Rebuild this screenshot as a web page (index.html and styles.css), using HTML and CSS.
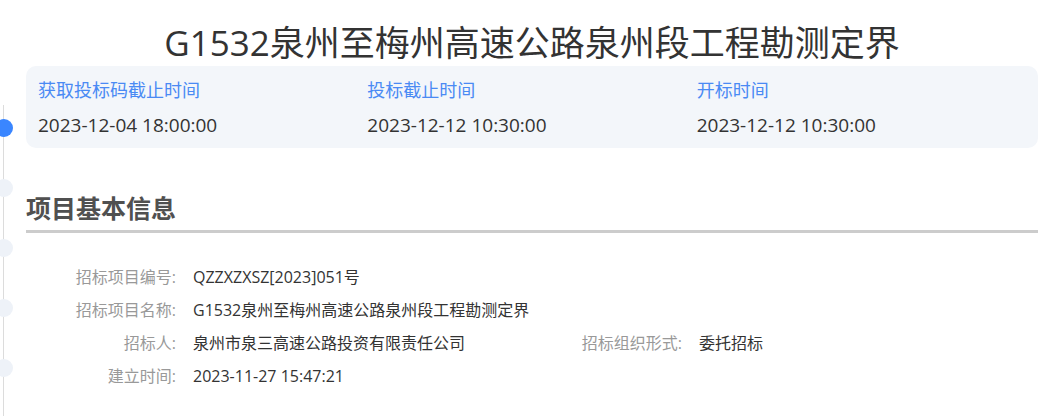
FILE: index.html
```html
<!DOCTYPE html>
<html lang="zh-CN">
<head>
    <meta charset="UTF-8">
    <meta name="viewport" content="width=device-width, initial-scale=1.0">
    <title>G1532泉州至梅州高速公路泉州段工程勘测定界</title>
    <link rel="stylesheet" href="styles.css">
</head>
<body>
    <div class="page">
        <!-- left anchor rail -->
        <div class="rail">
            <span class="dot active"></span>
            <span class="dot"></span>
            <span class="dot"></span>
            <span class="dot"></span>
            <span class="dot"></span>
        </div>

        <div class="main">
            <h1 class="title">G1532泉州至梅州高速公路泉州段工程勘测定界</h1>

            <div class="time-card">
                <div class="time-item">
                    <div class="time-label">获取投标码截止时间</div>
                    <div class="time-value">2023-12-04 18:00:00</div>
                </div>
                <div class="time-item">
                    <div class="time-label">投标截止时间</div>
                    <div class="time-value">2023-12-12 10:30:00</div>
                </div>
                <div class="time-item">
                    <div class="time-label">开标时间</div>
                    <div class="time-value">2023-12-12 10:30:00</div>
                </div>
            </div>

            <h2 class="section-title">项目基本信息</h2>

            <div class="info">
                <div class="info-row">
                    <div class="info-item wide">
                        <span class="info-label">招标项目编号:</span>
                        <span class="info-value">QZZXZXSZ[2023]051号</span>
                    </div>
                </div>
                <div class="info-row">
                    <div class="info-item wide">
                        <span class="info-label">招标项目名称:</span>
                        <span class="info-value">G1532泉州至梅州高速公路泉州段工程勘测定界</span>
                    </div>
                </div>
                <div class="info-row">
                    <div class="info-item">
                        <span class="info-label">招标人:</span>
                        <span class="info-value">泉州市泉三高速公路投资有限责任公司</span>
                    </div>
                    <div class="info-item">
                        <span class="info-label">招标组织形式:</span>
                        <span class="info-value">委托招标</span>
                    </div>
                </div>
                <div class="info-row">
                    <div class="info-item wide">
                        <span class="info-label">建立时间:</span>
                        <span class="info-value">2023-11-27 15:47:21</span>
                    </div>
                </div>
            </div>
        </div>
    </div>
</body>
</html>
```

FILE: styles.css
```css
body {
    margin: 0;
    font-family: "Open Sans", "Noto Sans CJK SC", sans-serif;
    background-color: #ffffff;
    color: #333333;
    overflow: hidden;
}
.page {
    display: flex;
    height: 416px;
}

/* anchor rail on the left */
.rail {
    margin-top: 105px;
    margin-left: 3px;
    width: 22px;
    border-left: 1px solid #dcdcdc;
    display: flex;
    flex-direction: column;
    gap: 42px;
    padding-top: 14px;
    flex-shrink: 0;
}
.dot {
    display: block;
    width: 18px;
    height: 18px;
    margin-left: -9px;
    border-radius: 50%;
    background-color: #eef2f8;
}
.dot.active {
    background-color: #3a86ff;
}

.main {
    width: 1012px;
}
.title {
    margin: 0;
    padding-top: 20px;
    font-size: 35px;
    font-weight: normal;
    line-height: 46px;
    text-align: center;
    color: #333333;
}

/* time card */
.time-card {
    display: flex;
    height: 82px;
    padding: 0 12px;
    background-color: #f3f6fa;
    border-radius: 10px;
}
.time-item {
    width: 329.5px;
}
.time-label {
    padding-top: 12px;
    font-size: 18px;
    line-height: 24px;
    color: #4a8af4;
}
.time-value {
    margin-top: 11px;
    font-size: 19px;
    line-height: 24px;
    color: #333333;
}

/* section */
.section-title {
    margin: 42px 0 0;
    padding-bottom: 4px;
    font-size: 25px;
    line-height: 36px;
    font-weight: bold;
    color: #505050;
    border-bottom: 3px solid #cccccc;
}
.info {
    padding-top: 28px;
}
.info-row {
    display: flex;
    line-height: 33px;
    font-size: 16px;
}
.info-item {
    display: flex;
    width: 506px;
}
.info-item.wide {
    width: 100%;
}
.info-label {
    width: 150px;
    margin-right: 17px;
    text-align: right;
    color: #999999;
    flex-shrink: 0;
}
.info-value {
    color: #333333;
}
```
